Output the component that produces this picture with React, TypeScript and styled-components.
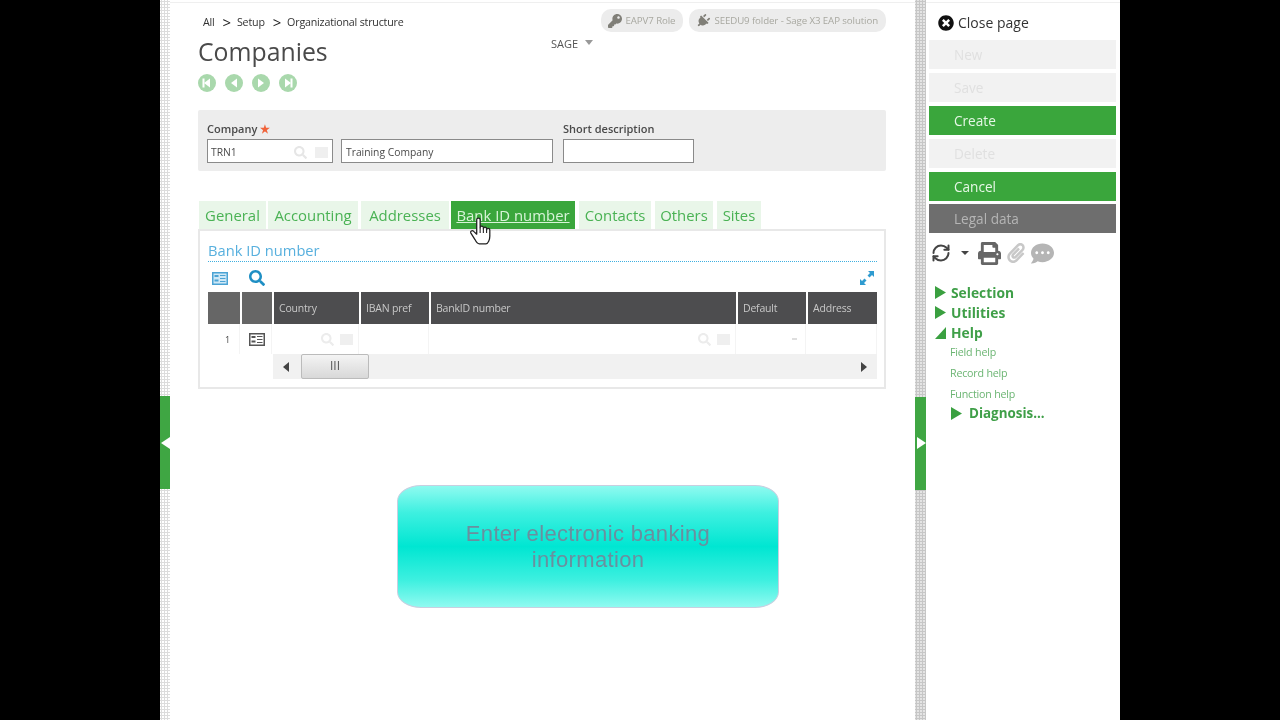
import styled, { createGlobalStyle } from "styled-components";
import { FaCommentDots, FaKey, FaPaperclip, FaPlug, FaPrint, FaSearch, FaTimesCircle } from "react-icons/fa";
import { RefreshCw } from "lucide-react";

const crumbs = ["All", "Setup", "Organizational structure"];
const tabs = [
    { label: "General", width: 67, after: 2 },
    { label: "Accounting", width: 90, after: 3 },
    { label: "Addresses", width: 88, after: 2 },
    { label: "Bank ID number", width: 124, after: 4 },
    { label: "Contacts", width: 72, after: 4 },
    { label: "Others", width: 58, after: 4 },
    { label: "Sites", width: 44, after: 0 },
];
const columns = [
    { label: "", width: 32, dim: true },
    { label: "", width: 30, dim: true },
    { label: "Country", width: 85 },
    { label: "IBAN pref", width: 68 },
    { label: "BankID number", width: 305 },
    { label: "Default", width: 68 },
    { label: "Address", width: 69 },
];
const actions = [
    { label: "New", kind: "off" },
    { label: "Save", kind: "off" },
    { label: "Create", kind: "on" },
    { label: "Delete", kind: "off" },
    { label: "Cancel", kind: "on" },
    { label: "Legal data", kind: "dark" },
];

function NavIcon({ shape }: { shape: "first" | "prev" | "next" | "last" }) {
    const left = shape === "first" || shape === "prev";
    const bar = shape === "first" || shape === "last";
    return (
        <svg width="18" height="18" viewBox="0 0 18 18">
            <circle cx="9" cy="9" r="9" fill="#a9d8ac" />
            <path d={left ? "M12 4.5V13.5L6 9Z" : "M6 4.5V13.5L12 9Z"} fill="#fff" />
            {bar && <rect x={left ? 4.5 : 11.5} y="4.5" width="2" height="9" fill="#fff" />}
        </svg>
    );
}

function CardIcon({ color, fill }: { color: string; fill: string }) {
    return (
        <svg width="16" height="13" viewBox="0 0 16 13">
            <rect x="0.75" y="0.75" width="14.5" height="11.5" fill={fill} stroke={color} strokeWidth="1.5" />
            <rect x="2.5" y="3" width="4" height="2" fill={color} />
            <rect x="2.5" y="7.5" width="4" height="2" fill={color} />
            <path d="M8 3.5H13.5M8 6.5H13.5M8 9.5H13.5" stroke={color} strokeWidth="1.2" />
        </svg>
    );
}

function ExpandIcon() {
    return (
        <svg width="16" height="16" viewBox="0 0 16 16">
            <path d="M9 1H15V7L13 5L10.5 7.5L8.5 5.5L11 3Z" fill="#2f9bd0" />
            <path d="M1 9V15H7L5 13L7.5 10.5L5.5 8.5L3 11Z" fill="#2f9bd0" />
        </svg>
    );
}

function HandIcon() {
    return (
        <svg width="24" height="29" viewBox="0 0 22 27">
            <path
                d="M7 2.6a1.6 1.6 0 0 1 3.2 0V10a1.5 1.5 0 0 1 3 0v1a1.5 1.5 0 0 1 3 0v1a1.5 1.5 0 0 1 3 0v6c0 3-1.6 7-3.6 7H9.400c-2 0-3-2-4-4L1.600 15c-1-1.700 1.200-3.200 2.600-1.600L7 16Z"
                fill="#fff"
                stroke="#222"
                strokeWidth="1.2"
                strokeLinejoin="round"
            />
            <path d="M10.200 10V15M13.200 11V15M16.200 12V15" stroke="#222" strokeWidth="1" />
        </svg>
    );
}

function Arrow({ dir }: { dir: "right" | "down" }) {
    return (
        <svg width="11" height="13" viewBox="0 0 11 13">
            <path d={dir === "right" ? "M0 0L11 6.500L0 13Z" : "M11 1V13H0Z"} fill="#3aa040" />
        </svg>
    );
}

function App() {
    return (
        <>
            <GlobalStyle />
            <Page>
                <LeftSplitter>
                    <SplitGrip>
                        <LeftNotch />
                    </SplitGrip>
                </LeftSplitter>
                <Main>
                    <Header>
                        <HeaderLeft>
                            <Breadcrumb>
                                {crumbs.map((crumb, i) => (
                                    <Crumb key={crumb}>
                                        {i > 0 && <CrumbSep>&gt;</CrumbSep>}
                                        {crumb}
                                    </Crumb>
                                ))}
                            </Breadcrumb>
                            <Title>Companies</Title>
                            <NavRow>
                                <NavIcon shape="first" />
                                <NavIcon shape="prev" />
                                <NavIcon shape="next" />
                                <NavIcon shape="last" />
                            </NavRow>
                        </HeaderLeft>
                        <SageMenu>
                            SAGE <SageCaret />
                        </SageMenu>
                        <Pills>
                            <Pill>
                                <FaKey size={14} color="#807f78" />
                                EAPV7 Role
                            </Pill>
                            <Pill>
                                <PlugIcon size={14} color="#807f78" />
                                SEEDU9 folder - Sage X3 EAP solution
                            </Pill>
                        </Pills>
                    </Header>

                    <CompanyBlock>
                        <Field $width={126}>
                            <FieldLabel>
                                Company <Required>★</Required>
                            </FieldLabel>
                            <FieldInput>
                                TRN1
                                <FieldIcons>
                                    <FaSearch size={13} color="#e6e6e6" />
                                    <FieldStub />
                                </FieldIcons>
                            </FieldInput>
                        </Field>
                        <Field $width={212}>
                            <FieldLabel>&nbsp;</FieldLabel>
                            <FieldInput $indent>Training Company</FieldInput>
                        </Field>
                        <ShortField $width={131}>
                            <FieldLabel>Short description</FieldLabel>
                            <FieldInput />
                        </ShortField>
                    </CompanyBlock>

                    <TabBar>
                        {tabs.map((tab) => (
                            <Tab key={tab.label} $width={tab.width} $after={tab.after} $active={tab.label === "Bank ID number"}>
                                {tab.label}
                                {tab.label === "Bank ID number" && (
                                    <Cursor>
                                        <HandIcon />
                                    </Cursor>
                                )}
                            </Tab>
                        ))}
                    </TabBar>

                    <Panel>
                        <PanelTitle>Bank ID number</PanelTitle>
                        <PanelTools>
                            <ToolGroup>
                                <CardIcon color="#4ba3d4" fill="#cfe8f6" />
                                <FaSearch size={16} color="#1f8fc4" />
                            </ToolGroup>
                            <ExpandIcon />
                        </PanelTools>
                        <HeadRow>
                            {columns.map((col, i) => (
                                <HeadCell key={i} $width={col.width} $dim={col.dim}>
                                    {col.label}
                                </HeadCell>
                            ))}
                        </HeadRow>
                        <BodyRow>
                            <BodyCell $width={32}>
                                <RowNumber>1</RowNumber>
                            </BodyCell>
                            <BodyCell $width={30}>
                                <CardIcon color="#555" fill="#fff" />
                            </BodyCell>
                            <BodyCell $width={85} $end>
                                <FaSearch size={13} color="#ececec" />
                                <FieldStub />
                            </BodyCell>
                            <BodyCell $width={68} />
                            <BodyCell $width={305} $end>
                                <FaSearch size={13} color="#ececec" />
                                <FieldStub />
                            </BodyCell>
                            <BodyCell $width={68} $end>
                                <SmallCaret />
                            </BodyCell>
                            <BodyCell $width={69} />
                        </BodyRow>
                        <ScrollTrack>
                            <ScrollLeft />
                            <ScrollThumb>III</ScrollThumb>
                            <ScrollRight />
                        </ScrollTrack>
                    </Panel>

                    <Callout>Enter electronic banking information</Callout>
                </Main>

                <RightSplitter>
                    <SplitGrip $wide>
                        <RightNotch />
                    </SplitGrip>
                </RightSplitter>

                <Side>
                    <ClosePage>
                        <FaTimesCircle size={16} color="#111" />
                        Close page
                    </ClosePage>
                    <Actions>
                        {actions.map((action) => (
                            <ActionButton key={action.label} $kind={action.kind}>
                                {action.label}
                            </ActionButton>
                        ))}
                    </Actions>
                    <SideTools>
                        <RefreshCw size={20} color="#444" strokeWidth={2.4} />
                        <ToolCaret />
                        <FaPrint size={23} color="#666" />
                        <FaPaperclip size={20} color="#c8c8c8" />
                        <FaCommentDots size={23} color="#b5b5b5" />
                    </SideTools>
                    <Menu>
                        <MenuHead>
                            <Arrow dir="right" />
                            Selection
                        </MenuHead>
                        <MenuHead>
                            <Arrow dir="right" />
                            Utilities
                        </MenuHead>
                        <MenuHead>
                            <Arrow dir="down" />
                            Help
                        </MenuHead>
                        <MenuLink>Field help</MenuLink>
                        <MenuLink>Record help</MenuLink>
                        <MenuLink>Function help</MenuLink>
                        <SubHead>
                            <Arrow dir="right" />
                            Diagnosis...
                        </SubHead>
                    </Menu>
                </Side>
            </Page>
        </>
    );
}

export default App;

const GlobalStyle = createGlobalStyle`
    html, body {
        margin: 0;
        height: 100%;
        background: #000;
        overflow: hidden;
    }
    * {
        box-sizing: border-box;
    }
`;

const Page = styled.div`
    display: flex;
    width: 960px;
    height: 720px;
    margin-left: 160px;
    background: #fff;
    font-family: "Open Sans", "Noto Sans", sans-serif;
    overflow: hidden;
    filter: blur(0.35px);
`;

const LeftSplitter = styled.div`
    flex: 0 0 10px;
    padding-top: 396px;
    background-image: radial-gradient(#dcdcdc 1px, transparent 1.2px);
    background-size: 3px 3px;
`;

const RightSplitter = styled.div`
    flex: 0 0 11px;
    padding-top: 397px;
    background-color: #e4e4e4;
    background-image: radial-gradient(#c6c6c6 1px, transparent 1.2px);
    background-size: 3px 3px;
`;

const SplitGrip = styled.div<{ $wide?: boolean }>`
    position: relative;
    height: 93px;
    background: #3fa643;
`;

const LeftNotch = styled.div`
    position: absolute;
    top: 41px;
    right: 0;
    border-style: solid;
    border-width: 6px 9px 6px 0;
    border-color: transparent #fff transparent transparent;
`;

const RightNotch = styled.div`
    position: absolute;
    top: 40px;
    right: 0;
    border-style: solid;
    border-width: 6.5px 0 6.5px 9px;
    border-color: transparent transparent transparent #fff;
`;

const Main = styled.main`
    flex: 0 0 745px;
    padding: 0 29px 0 28px;
    border-top: 1px solid #efefef;
    margin-top: 2px;
`;

const Header = styled.header`
    display: flex;
    height: 107px;
`;

const HeaderLeft = styled.div`
    flex: 0 0 353px;
`;

const Breadcrumb = styled.div`
    display: flex;
    align-items: center;
    height: 20px;
    margin: 9px 0 0 5px;
`;

const Crumb = styled.span`
    display: flex;
    align-items: center;
    font-size: 10.7px;
    letter-spacing: -0.2px;
    color: #333;
`;

const CrumbSep = styled.span`
    margin: 0 6px 0 8px;
    font-size: 15px;
    color: #222;
`;

const Title = styled.h1`
    margin: 3px 0 0;
    font-size: 24.8px;
    line-height: 32px;
    font-weight: 400;
    color: #4a4a4a;
`;

const NavRow = styled.div`
    display: flex;
    gap: 9px;
    margin-top: 7px;
`;

const SageMenu = styled.div`
    display: flex;
    align-items: center;
    gap: 7px;
    height: 16px;
    margin-top: 32px;
    font-size: 11px;
    color: #555;
`;

const SageCaret = styled.span`
    border-style: solid;
    border-width: 5px 4.5px 0;
    border-color: #999 transparent transparent;
    margin-bottom: 2px;
`;

const Pills = styled.div`
    display: flex;
    gap: 6px;
    margin-left: auto;
    margin-top: 6px;
    height: 23px;
`;

const Pill = styled.div`
    display: flex;
    align-items: center;
    gap: 4px;
    padding: 0 8px 0 7px;
    border-radius: 10px;
    background: #ececec;
    font-size: 9.7px;
    letter-spacing: -0.1px;
    white-space: nowrap;
    color: #a8a8a0;
`;

const PlugIcon = styled(FaPlug)`
    transform: rotate(45deg);
`;

const CompanyBlock = styled.section`
    display: flex;
    gap: 8px;
    height: 61px;
    padding: 11px 0 0 9px;
    border-radius: 2px;
    background: #ededed;
`;

const Field = styled.div<{ $width: number }>`
    width: ${(p) => p.$width}px;
`;

const ShortField = styled(Field)`
    margin-left: 2px;
`;

const FieldLabel = styled.div`
    height: 18px;
    font-size: 11px;
    line-height: 15px;
    font-weight: 600;
    color: #4a4a4a;
    white-space: nowrap;
`;

const Required = styled.span`
    color: #f0633a;
`;

const FieldInput = styled.div<{ $indent?: boolean }>`
    display: flex;
    align-items: center;
    justify-content: space-between;
    height: 24px;
    padding: 2px 4px 0 ${(p) => (p.$indent ? 4 : 3)}px;
    border: 1px solid #8a8a8a;
    background: #fff;
    font-size: 10.3px;
    color: #4a4a4a;
`;

const FieldIcons = styled.span`
    display: flex;
    align-items: center;
    gap: 8px;
`;

const FieldStub = styled.span`
    width: 13px;
    height: 11px;
    background: #efefef;
`;

const TabBar = styled.nav`
    display: flex;
    align-items: flex-end;
    height: 29px;
    margin-top: 29px;
    margin-left: 1px;
`;

const Tab = styled.div<{ $active?: boolean; $width: number; $after: number }>`
    position: relative;
    flex: 0 0 ${(p) => p.$width}px;
    height: 28px;
    margin-right: ${(p) => p.$after}px;
    background: ${(p) => (p.$active ? "#3aa63c" : "#e9f6e9")};
    color: ${(p) => (p.$active ? "#d8f4d8" : "#4ab254")};
    text-decoration: ${(p) => (p.$active ? "underline" : "none")};
    font-size: 14.9px;
    line-height: 28px;
    text-align: center;
    white-space: nowrap;
`;

const Cursor = styled.span`
    position: absolute;
    left: 18px;
    top: 16px;
    width: 24px;
    height: 29px;
`;

const Panel = styled.section`
    height: 160px;
    padding: 0 7px 0 8px;
    border: 2px solid #e8e8e8;
`;

const PanelTitle = styled.h2`
    height: 31px;
    margin: 0;
    padding-top: 10px;
    border-bottom: 1px dotted #3fb0e0;
    font-size: 14.7px;
    line-height: 19px;
    font-weight: 400;
    color: #58b0de;
`;

const PanelTools = styled.div`
    display: flex;
    align-items: center;
    justify-content: space-between;
    height: 30px;
    padding: 2px 2px 0 4px;
`;

const ToolGroup = styled.div`
    display: flex;
    align-items: center;
    gap: 21px;
`;

const HeadRow = styled.div`
    display: flex;
    gap: 2px;
    height: 32px;
`;

const HeadCell = styled.div<{ $width: number; $dim?: boolean }>`
    flex: 0 0 ${(p) => p.$width}px;
    padding-left: 5px;
    background: ${(p) => (p.$dim ? "#666" : "#4d4d4f")};
    color: #c8c8c8;
    font-size: 10.5px;
    line-height: 32px;
    letter-spacing: -0.2px;
    white-space: nowrap;
`;

const BodyRow = styled.div`
    display: flex;
    gap: 2px;
    height: 30px;
`;

const BodyCell = styled.div<{ $width: number; $end?: boolean }>`
    flex: 0 0 ${(p) => p.$width}px;
    display: flex;
    align-items: center;
    justify-content: ${(p) => (p.$end ? "flex-end" : "center")};
    gap: 6px;
    padding-right: ${(p) => (p.$end ? 5 : 0)}px;
    border-right: 1px solid #f4f4f4;
`;

const RowNumber = styled.span`
    margin-left: 8px;
    font-size: 9px;
    color: #444;
`;

const SmallCaret = styled.span`
    width: 5px;
    height: 2px;
    margin-right: 3px;
    background: #dedede;
`;

const ScrollTrack = styled.div`
    display: flex;
    align-items: center;
    height: 25px;
    margin-left: 65px;
    padding: 0 10px;
    background: #f1f1f1;
`;

const ScrollLeft = styled.span`
    border-style: solid;
    border-width: 5px 6px 5px 0;
    border-color: transparent #444 transparent transparent;
`;

const ScrollThumb = styled.div`
    width: 68px;
    height: 25px;
    margin-left: 12px;
    border: 1px solid #bbb;
    border-radius: 2px;
    background: linear-gradient(#f4f4f4, #d8d8d8);
    color: #555;
    font-size: 12px;
    line-height: 22px;
    text-align: center;
`;

const ScrollRight = styled.span`
    margin-left: auto;
    border-style: solid;
    border-width: 5px 0 5px 6px;
    border-color: transparent transparent transparent #444;
`;

const Callout = styled.div`
    display: flex;
    align-items: center;
    justify-content: center;
    width: 382px;
    height: 123px;
    margin: 96px 0 0 199px;
    padding: 0 60px;
    border: 1px solid #c8cfe0;
    border-radius: 24px / 16px;
    background: linear-gradient(#8ffaf0 0%, #3ef0e0 22%, #00e6d2 50%, #3ef0e0 78%, #8ffaf0 100%);
    font-family: "Liberation Sans", Arial, sans-serif;
    font-size: 22px;
    line-height: 26px;
    letter-spacing: 0.35px;
    text-align: center;
    color: #6a8f9f;
`;

const Side = styled.aside`
    flex: 1;
    margin-top: 2px;
    padding: 0 4px 0 3px;
    border-top: 1px solid #efefef;
`;

const ClosePage = styled.div`
    display: flex;
    align-items: center;
    gap: 4px;
    height: 37px;
    padding: 2px 0 0 9px;
    font-size: 14px;
    color: #333;
`;

const Actions = styled.div`
    display: flex;
    flex-direction: column;
    gap: 4px;
`;

const ActionButton = styled.div<{ $kind: string }>`
    height: 29px;
    margin-top: ${(p) => (p.$kind === "dark" ? -1 : 0)}px;
    padding-left: 25px;
    background: ${(p) => (p.$kind === "on" ? "#3aa63c" : p.$kind === "dark" ? "#6e6e6e" : "#f2f2f2")};
    color: ${(p) => (p.$kind === "on" ? "#e6f7e6" : p.$kind === "dark" ? "#b5b5b5" : "#e0e0e0")};
    font-size: 13.6px;
    line-height: 29px;
`;

const SideTools = styled.div`
    display: flex;
    align-items: center;
    gap: 5px;
    height: 26px;
    margin-top: 7px;
    padding-left: 2px;
`;

const ToolCaret = styled.span`
    margin: 0 4px 0 5px;
    border-style: solid;
    border-width: 4.5px 4px 0;
    border-color: #444 transparent transparent;
`;

const Menu = styled.nav`
    margin-top: 16px;
    padding-left: 6px;
`;

const MenuHead = styled.div`
    display: flex;
    align-items: center;
    gap: 5px;
    height: 20px;
    font-size: 13.8px;
    font-weight: 700;
    color: #3f9f48;
`;

const MenuLink = styled.div`
    height: 21px;
    padding-left: 15px;
    font-size: 10.7px;
    line-height: 20px;
    letter-spacing: -0.2px;
    color: #6cb573;
`;

const SubHead = styled(MenuHead)`
    gap: 7px;
    margin-top: -2px;
    padding-left: 16px;
    font-size: 13.4px;
`;
